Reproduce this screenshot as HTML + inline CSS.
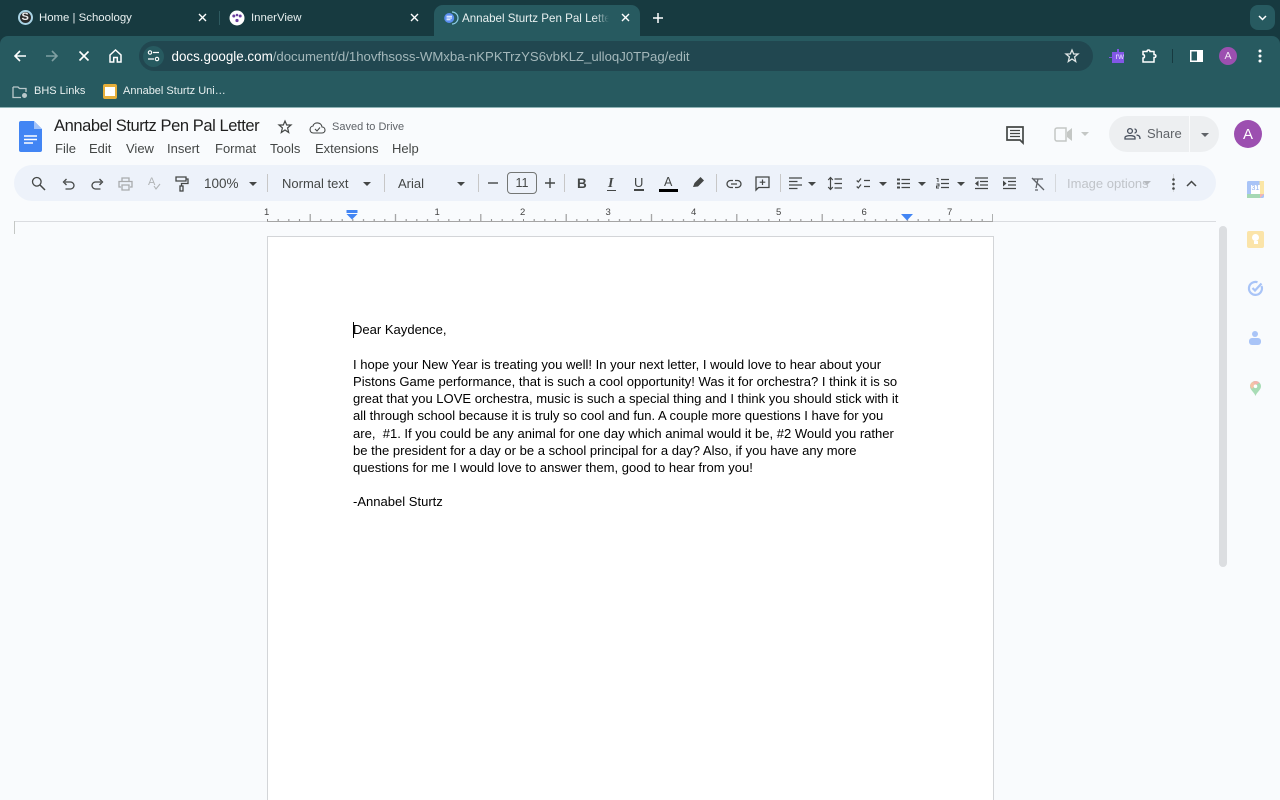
<!DOCTYPE html>
<html lang="en"><head><meta charset="utf-8"><title>Annabel Sturtz Pen Pal Letter</title>
<style>
html,body{margin:0;padding:0;width:1280px;height:800px;overflow:hidden;background:#f9fbfd;font-family:"Liberation Sans",Arial,sans-serif}
#root{position:absolute;left:0;top:0;width:1280px;height:800px;overflow:hidden;filter:blur(.3px)}
.a{position:absolute}
.t{position:absolute;white-space:nowrap;line-height:1}
svg{position:absolute;overflow:visible}
.w{color:#e8f0f0}
.m{font-size:13px;color:#444746;top:142px}
.d{font-size:13.04px;color:#000;left:353px;line-height:17px;white-space:nowrap;position:absolute}
.sep{position:absolute;width:1px;background:#c7c7c7;top:174px;height:18px}
</style></head><body><div id="root">
<!-- chrome -->
<div class="a" style="left:0;top:0;width:1280px;height:46px;background:#173a40"></div>
<div class="a" style="left:0;top:36px;width:1280px;height:71px;background:#275a60;border-radius:8px 8px 0 0"></div>
<div class="a" style="left:0;top:107px;width:1280px;height:1px;background:#8fb3b5"></div>
<div class="a" style="left:434px;top:5px;width:206px;height:31px;background:#275a60;border-radius:9px 9px 0 0"></div>
<div class="a" style="left:219px;top:11px;width:1px;height:14px;background:#2e5a60"></div>
<!-- tab 1 -->
<div class="a" style="left:18px;top:10px;width:11px;height:11px;border:2px solid #a9d4e6;border-radius:50%;background:#2b2b2b"></div>
<div class="t" style="left:21.5px;top:12px;font-size:11px;font-weight:bold;color:#eee">S</div>
<div class="t w" style="left:39px;top:12.500px;font-size:11.4px">Home | Schoology</div>
<svg style="left:198px;top:13px" width="9" height="9"><path d="M1 1L8 8M8 1L1 8" stroke="#fff" stroke-width="1.4"/></svg>
<!-- tab 2 -->
<svg style="left:229px;top:10px" width="16" height="16" viewBox="0 0 16 16"><circle cx="8" cy="8" r="7.5" fill="#fff"/><circle cx="4.8" cy="6" r="1.5" fill="#6b3fa0"/><circle cx="11.2" cy="6" r="1.5" fill="#6b3fa0"/><circle cx="8" cy="5" r="1.3" fill="#6b3fa0"/><circle cx="8" cy="10.5" r="1.6" fill="#6b3fa0"/></svg>
<div class="t w" style="left:251px;top:12.500px;font-size:11.4px">InnerView</div>
<svg style="left:410px;top:13px" width="9" height="9"><path d="M1 1L8 8M8 1L1 8" stroke="#fff" stroke-width="1.4"/></svg>
<!-- tab 3 -->
<svg style="left:443px;top:11px" width="14" height="14" viewBox="0 0 14 14"><path d="M9 1A6 6 0 0 1 9 13" fill="none" stroke="#8fd0ea" stroke-width="1.2"/><circle cx="6.2" cy="7" r="5" fill="#5b8ff0"/><path d="M3.5 5.2H9M3.5 7H9M3.5 8.8H7.5" stroke="#fff" stroke-width="1"/></svg>
<div class="t w" style="left:462px;top:12.500px;font-size:11.6px;width:147px;overflow:hidden">Annabel Sturtz Pen Pal Letter</div>
<div class="a" style="left:595px;top:8px;width:14px;height:20px;background:linear-gradient(90deg,rgba(39,90,96,0),#275a60)"></div>
<svg style="left:621px;top:13px" width="9" height="9"><path d="M1 1L8 8M8 1L1 8" stroke="#fff" stroke-width="1.4"/></svg>
<svg style="left:652px;top:12px" width="12" height="12"><path d="M6 1V11M1 6H11" stroke="#fff" stroke-width="1.5"/></svg>
<div class="a" style="left:1250px;top:5px;width:25px;height:25px;border-radius:8px;background:#275a60"></div>
<svg style="left:1257px;top:15px" width="11" height="6"><path d="M2 1L5.5 4.5L9 1" fill="none" stroke="#fff" stroke-width="1.5"/></svg>
<!-- nav -->
<svg style="left:13px;top:49px" width="14" height="14"><path d="M13 7H2M7 2L2 7L7 12" fill="none" stroke="#fff" stroke-width="1.6"/></svg>
<svg style="left:45px;top:49px" width="14" height="14"><path d="M1 7H12M7 2L12 7L7 12" fill="none" stroke="#7f9fa2" stroke-width="1.6"/></svg>
<svg style="left:78px;top:50px" width="12" height="12"><path d="M1.5 1.5L10.500 10.500M10.500 1.500L1.500 10.500" stroke="#fff" stroke-width="1.6"/></svg>
<svg style="left:109px;top:49px" width="13" height="14"><path d="M1 6L6.500 1L12 6V13H8.300V8.500H4.700V13H1Z" fill="none" stroke="#fff" stroke-width="1.5"/></svg>
<div class="a" style="left:139px;top:41px;width:954px;height:30px;border-radius:15px;background:#214750"></div>
<div class="a" style="left:143px;top:46px;width:21px;height:21px;border-radius:50%;background:#275a60"></div>
<svg style="left:147px;top:50px" width="13" height="12"><circle cx="3" cy="2.500" r="1.700" fill="none" stroke="#fff" stroke-width="1.100"/><path d="M6 2.500H12M1 9H7" stroke="#fff" stroke-width="1.200"/><circle cx="10" cy="9" r="1.700" fill="none" stroke="#fff" stroke-width="1.100"/></svg>
<div class="t" style="left:171.500px;top:49.500px;font-size:13.400px;color:#fff">docs.google.com<span style="color:#a4b8bb;font-size:13.180px">/document/d/1hovfhsoss-WMxba-nKPKTrzYS6vbKLZ_ulloqJ0TPag/edit</span></div>
<svg style="left:1065px;top:49px" width="14" height="14" viewBox="0 0 14 14"><path d="M7 1L8.700 5H13L9.600 7.900L10.700 12.500L7 10L3.300 12.500L4.400 7.900L1 5H5.300Z" fill="none" stroke="#e0e6e6" stroke-width="1.300"/></svg>
<svg style="left:1109px;top:49px" width="15" height="14"><path d="M0 8H3V3H8V0H10V3H15V14H3V9H0Z" fill="#8257e6"/></svg>
<div class="t" style="left:1115.500px;top:53px;font-size:8px;color:#e9e0ff">rw</div>
<svg style="left:1142px;top:49px" width="15" height="14"><path d="M1 2.500H5C5 .5 8 .5 8 2.500H12V5.500C14.500 5.500 14.500 8.500 12 8.500V13H1V9C3 9 3 5.500 1 5.500Z" fill="none" stroke="#fff" stroke-width="1.500"/></svg>
<div class="a" style="left:1172px;top:49px;width:1px;height:14px;background:#173a40"></div>
<svg style="left:1190px;top:50px" width="13" height="12"><rect x=".75" y=".75" width="11.500" height="10.500" fill="none" stroke="#fff" stroke-width="1.500"/><rect x="7" y="1" width="5" height="10" fill="#fff"/></svg>
<div class="a" style="left:1219px;top:47px;width:18px;height:18px;border-radius:50%;background:#9c4fb0"></div>
<div class="t" style="left:1224.500px;top:51px;font-size:10.500px;color:#f3e6f6">A</div>
<svg style="left:1258px;top:49px" width="4" height="14"><circle cx="2" cy="2" r="1.500" fill="#fff"/><circle cx="2" cy="7" r="1.500" fill="#fff"/><circle cx="2" cy="12" r="1.500" fill="#fff"/></svg>
<!-- bookmarks -->
<svg style="left:12px;top:85px" width="17" height="14"><path d="M1 2H6L7.500 3.500H14V7M1 2V12.500H9" fill="none" stroke="#b9c8ca" stroke-width="1.300"/><circle cx="12.500" cy="10.500" r="2.500" fill="#b9c8ca"/></svg>
<div class="t w" style="left:34px;top:86px;font-size:11px">BHS Links</div>
<div class="a" style="left:103px;top:84px;width:14px;height:15px;border-radius:2px;background:#e6ae3a"></div>
<div class="a" style="left:105px;top:87px;width:10px;height:9px;background:#fff"></div>
<div class="t w" style="left:123px;top:86px;font-size:11px">Annabel Sturtz Uni…</div>

<!-- docs header -->
<svg style="left:19px;top:121px" width="23" height="31" viewBox="0 0 23 31"><path d="M2 0H15L23 8V29A2 2 0 0 1 21 31H2A2 2 0 0 1 0 29V2A2 2 0 0 1 2 0Z" fill="#4285f4"/><path d="M15 0L23 8H15Z" fill="#a1c2fa"/><path d="M5 15H18M5 18.500H18M5 22H14" stroke="#fff" stroke-width="1.500"/></svg>
<div class="t" style="left:54px;top:118px;font-size:16.500px;letter-spacing:-.42px;color:#1f1f1f">Annabel Sturtz Pen Pal Letter</div>
<svg style="left:278px;top:120px" width="14" height="14" viewBox="0 0 14 14"><path d="M7 1L8.700 5H13L9.600 7.900L10.700 12.500L7 10L3.300 12.500L4.400 7.900L1 5H5.300Z" fill="none" stroke="#444746" stroke-width="1.200"/></svg>
<svg style="left:309px;top:121px" width="17" height="13" viewBox="0 0 17 13"><path d="M4.500 12H13C17 12 17 6 13 6C12.500 1 5 .5 4 5C0 5.500 0 12 4.500 12Z" fill="none" stroke="#444746" stroke-width="1.100"/><path d="M6 8L8 10L11 6.500" fill="none" stroke="#444746" stroke-width="1.100"/></svg>
<div class="t" style="left:332px;top:122px;font-size:11px;color:#5f6368">Saved to Drive</div>
<div class="t m" style="left:55px">File</div>
<div class="t m" style="left:89px">Edit</div>
<div class="t m" style="left:126px">View</div>
<div class="t m" style="left:167px">Insert</div>
<div class="t m" style="left:215px">Format</div>
<div class="t m" style="left:270px">Tools</div>
<div class="t m" style="left:315px">Extensions</div>
<div class="t m" style="left:392px">Help</div>
<!-- right header -->
<svg style="left:1006px;top:126px" width="18" height="18" viewBox="0 0 18 18"><path d="M1 1H17V17L14 14H1Z" fill="none" stroke="#444746" stroke-width="1.700"/><path d="M4 4.500H14M4 7.500H14M4 10.500H14" stroke="#444746" stroke-width="1.300"/></svg>
<svg style="left:1054px;top:127px" width="18" height="15"><path d="M3 1H12V14H3A2 2 0 0 1 1 12V3A2 2 0 0 1 3 1Z" fill="none" stroke="#c4c7c5" stroke-width="1.500"/><path d="M13 5L18 1V14L13 10Z" fill="#c4c7c5"/></svg>
<svg style="left:1081px;top:132px" width="8" height="4"><path d="M0 0H8L4 4Z" fill="#c4c7c5"/></svg>
<div class="a" style="left:1109px;top:116px;width:110px;height:36px;border-radius:18px;background:#edeff1"></div>
<div class="a" style="left:1189px;top:116px;width:1px;height:36px;background:#fafbfc"></div>
<svg style="left:1124px;top:128px" width="17" height="12" viewBox="0 0 17 12"><circle cx="6" cy="3" r="2.400" fill="none" stroke="#474f5c" stroke-width="1.300"/><path d="M1 11V9.500C1 7 11 7 11 9.500V11Z" fill="none" stroke="#474f5c" stroke-width="1.300"/><path d="M10.500 1C13 1 13 5 10.500 5M12.500 7C15 7.500 16 8 16 11" fill="none" stroke="#474f5c" stroke-width="1.300"/></svg>
<div class="t" style="left:1147px;top:127px;font-size:13px;color:#5f6368">Share</div>
<svg style="left:1201px;top:133px" width="8" height="4"><path d="M0 0H8L4 4Z" fill="#5f6368"/></svg>
<div class="a" style="left:1234px;top:120px;width:28px;height:28px;border-radius:50%;background:#9c4fb0"></div>
<div class="t" style="left:1243px;top:127px;font-size:15px;color:#fff">A</div>

<!-- toolbar -->
<div class="a" style="left:14px;top:165px;width:1202px;height:36px;border-radius:18px;background:#edf2fa"></div>
<svg style="left:31px;top:176px" width="15" height="15"><circle cx="5.800" cy="5.800" r="4.300" fill="none" stroke="#444746" stroke-width="1.300"/><path d="M9 9L14 14" stroke="#444746" stroke-width="1.500"/></svg>
<svg style="left:62px;top:178px" width="13" height="12"><path d="M3 4H8.500A3.200 3.200 0 0 1 8.500 11H3.500M4.500 1L1.500 4L4.500 7" fill="none" stroke="#444746" stroke-width="1.300"/></svg>
<svg style="left:91px;top:178px" width="13" height="12"><path d="M10 4H4.500A3.200 3.200 0 0 0 4.500 11H9.500M8.500 1L11.500 4L8.500 7" fill="none" stroke="#444746" stroke-width="1.300"/></svg>
<svg style="left:118px;top:177px" width="15" height="14"><path d="M4 4V1H11V4M3 10H1V4.500H14V10H12M4 8H11V13H4Z" fill="none" stroke="#a9abad" stroke-width="1.300"/></svg>
<div class="t" style="left:148px;top:177px;font-size:11px;color:#b0b3b5">A</div>
<svg style="left:153px;top:183px" width="8" height="7"><path d="M1 3L3 6L7 1" fill="none" stroke="#b0b3b5" stroke-width="1.100"/></svg>
<svg style="left:175px;top:176px" width="14" height="16"><path d="M1 1H11V5H1ZM11 3H13V7.500H6.500V10" fill="none" stroke="#444746" stroke-width="1.300"/><rect x="5" y="10" width="3" height="5" fill="none" stroke="#444746" stroke-width="1.300"/></svg>
<div class="t" style="left:204px;top:177px;font-size:13.500px;color:#444746">100%</div>
<svg style="left:249px;top:182px" width="8" height="4"><path d="M0 0H8L4 4Z" fill="#444746"/></svg>
<div class="sep" style="left:267px"></div>
<div class="t" style="left:282px;top:176.500px;font-size:13px;color:#444746">Normal text</div>
<svg style="left:363px;top:182px" width="8" height="4"><path d="M0 0H8L4 4Z" fill="#444746"/></svg>
<div class="sep" style="left:384px"></div>
<div class="t" style="left:398px;top:176.500px;font-size:13px;color:#444746">Arial</div>
<svg style="left:457px;top:182px" width="8" height="4"><path d="M0 0H8L4 4Z" fill="#444746"/></svg>
<div class="sep" style="left:478px"></div>
<svg style="left:488px;top:182px" width="10" height="2"><path d="M0 1H10" stroke="#444746" stroke-width="1.400"/></svg>
<div class="a" style="left:507px;top:172px;width:28px;height:20px;border:1px solid #747775;border-radius:4px"></div>
<div class="t" style="left:515.500px;top:176.500px;font-size:12.500px;color:#444746">11</div>
<svg style="left:545px;top:178px" width="10" height="10"><path d="M5 0V10M0 5H10" stroke="#444746" stroke-width="1.400"/></svg>
<div class="sep" style="left:564px"></div>
<div class="t" style="left:577px;top:177px;font-size:13.500px;font-weight:bold;color:#444746">B</div>
<div class="t" style="left:608px;top:177px;font-family:'Liberation Serif',serif;font-size:14px;font-style:italic;font-weight:bold;color:#444746">I</div>
<div class="a" style="left:607px;top:189.500px;width:9px;height:1px;background:#444746"></div>
<div class="t" style="left:634px;top:176px;font-size:13px;color:#444746">U</div>
<div class="a" style="left:634px;top:189px;width:10px;height:1.500px;background:#444746"></div>
<div class="t" style="left:664px;top:176px;font-size:12.500px;color:#444746">A</div>
<div class="a" style="left:659px;top:188.500px;width:19px;height:3px;background:#000"></div>
<svg style="left:692px;top:175px" width="14" height="14"><path d="M1 12L2.500 8L8.500 2L12 5.500L6 11.500Z" fill="#444746"/></svg>
<div class="sep" style="left:716px"></div>
<svg style="left:726px;top:179px" width="16" height="10"><path d="M7 1.500H4.500A3.400 3.400 0 0 0 4.500 8.500H7M9 1.500H11.500A3.400 3.400 0 0 1 11.500 8.500H9M5 5H11" fill="none" stroke="#444746" stroke-width="1.300"/></svg>
<svg style="left:755px;top:176px" width="15" height="15"><path d="M1 1H14V11.500H3.500L1 14Z" fill="none" stroke="#444746" stroke-width="1.300"/><path d="M7.500 3.500V9M4.700 6.200H10.300" stroke="#444746" stroke-width="1.200"/></svg>
<div class="sep" style="left:780px"></div>
<svg style="left:789px;top:177px" width="13" height="13"><path d="M0 1H13M0 4.500H8.500M0 8H13M0 11.500H8.500" stroke="#444746" stroke-width="1.300"/></svg>
<svg style="left:808px;top:182px" width="8" height="4"><path d="M0 0H8L4 4Z" fill="#444746"/></svg>
<svg style="left:827px;top:177px" width="15" height="13"><path d="M3.500 1V12M1.200 3L3.500 .5L5.800 3M1.200 10L3.500 12.500L5.800 10" fill="none" stroke="#444746" stroke-width="1.200"/><path d="M7.500 2H15M7.500 6.500H15M7.500 11H15" stroke="#444746" stroke-width="1.300"/></svg>
<svg style="left:856px;top:178px" width="17" height="11"><path d="M.7 2.500L2.300 4L5 .5M.7 8.500L2.300 10L5 6.500" fill="none" stroke="#444746" stroke-width="1.200"/><path d="M8 2.500H14M8 8.500H14" stroke="#444746" stroke-width="1.300"/></svg>
<svg style="left:879px;top:182px" width="8" height="4"><path d="M0 0H8L4 4Z" fill="#444746"/></svg>
<svg style="left:897px;top:178px" width="13" height="11"><path d="M0 1.500H3M0 5.500H3M0 9.500H3" stroke="#444746" stroke-width="2"/><path d="M4.500 1.500H13M4.500 5.500H13M4.500 9.500H13" stroke="#444746" stroke-width="1.300"/></svg>
<svg style="left:918px;top:182px" width="8" height="4"><path d="M0 0H8L4 4Z" fill="#444746"/></svg>
<svg style="left:936px;top:177px" width="13" height="13"><path d="M.5 1.500H2V5M.5 7H3V9H.5V11H3" fill="none" stroke="#444746" stroke-width="1"/><path d="M5 2.500H13M5 6.500H13M5 10.500H13" stroke="#444746" stroke-width="1.300"/></svg>
<svg style="left:957px;top:182px" width="8" height="4"><path d="M0 0H8L4 4Z" fill="#444746"/></svg>
<svg style="left:975px;top:177px" width="13" height="13"><path d="M0 1H13M5 4.500H13M5 8H13M0 11.500H13" stroke="#444746" stroke-width="1.300"/><path d="M3.500 3.500V9.500L0 6.500Z" fill="#444746"/></svg>
<svg style="left:1003px;top:177px" width="13" height="13"><path d="M0 1H13M5 4.500H13M5 8H13M0 11.500H13" stroke="#444746" stroke-width="1.300"/><path d="M0 3.500V9.500L3.500 6.500Z" fill="#444746"/></svg>
<svg style="left:1031px;top:177px" width="14" height="14"><path d="M1 1L13 13M2 2H12M7 2L5 11M4 13H7" fill="none" stroke="#5f6368" stroke-width="1.300"/></svg>
<div class="sep" style="left:1055px;background:#d5d8dc"></div>
<div class="t" style="left:1067px;top:177px;font-size:13px;color:#c0c4c9">Image options</div>
<svg style="left:1143px;top:181px" width="8" height="4"><path d="M0 0H8L4 4Z" fill="#b6babf"/></svg>
<div class="a" style="left:1173px;top:174px;width:1px;height:18px;background:#d5d8dc"></div>
<svg style="left:1172px;top:178px" width="3" height="12"><circle cx="1.500" cy="1.500" r="1.300" fill="#444746"/><circle cx="1.500" cy="6" r="1.300" fill="#444746"/><circle cx="1.500" cy="10.500" r="1.300" fill="#444746"/></svg>
<svg style="left:1186px;top:180px" width="11" height="7"><path d="M1 6L5.500 1.500L10 6" fill="none" stroke="#444746" stroke-width="1.500"/></svg>

<!-- ruler -->
<div class="a" style="left:14px;top:221px;width:1202px;height:1px;background:#dadce0"></div>
<div class="a" style="left:14px;top:221px;width:1px;height:13px;background:#c4c7c5"></div>
<svg style="left:267px;top:210px" width="727" height="13">
<defs><pattern id="r" x="0" y="0" width="85.333" height="13" patternUnits="userSpaceOnUse"><path d="M.5 9V12M11.170 9V12M21.830 9V12M32.500 9V12M43.170 4V12M53.830 9V12M64.500 9V12M75.170 9V12" stroke="#8a8a8a" stroke-width="1" fill="none"/></pattern></defs>
<rect x="0" y="0" width="726" height="13" fill="url(#r)"/>
<path d="M0 11.500H726" stroke="#a5a5a5" stroke-width="1"/>
</svg>
<div class="t" style="left:264px;top:208px;font-size:9.500px;color:#444">1</div>
<div class="t" style="left:434.500px;top:208px;font-size:9.500px;color:#444">1</div>
<div class="t" style="left:520px;top:208px;font-size:9.500px;color:#444">2</div>
<div class="t" style="left:605.500px;top:208px;font-size:9.500px;color:#444">3</div>
<div class="t" style="left:691px;top:208px;font-size:9.500px;color:#444">4</div>
<div class="t" style="left:776px;top:208px;font-size:9.500px;color:#444">5</div>
<div class="t" style="left:861.500px;top:208px;font-size:9.500px;color:#444">6</div>
<div class="t" style="left:947px;top:208px;font-size:9.500px;color:#444">7</div>
<svg style="left:346px;top:210px" width="12" height="10"><rect x="0.500" y="0" width="11" height="3" fill="#4285f4"/><path d="M.5 4H11.500L6 9.500Z" fill="#4285f4"/></svg>
<svg style="left:901px;top:214px" width="12" height="7"><path d="M0 0H12L6 6.500Z" fill="#4285f4"/></svg>

<!-- page -->
<div class="a" style="left:267px;top:236px;width:725px;height:580px;background:#fff;border:1px solid #d3d5d8"></div>
<div class="a" style="left:353px;top:322px;width:1px;height:16px;background:#000"></div>
<div class="d" style="top:321px">Dear Kaydence,</div>
<div class="d" style="top:355.500px">I hope your New Year is treating you well! In your next letter, I would love to hear about your</div>
<div class="d" style="top:372.500px">Pistons Game performance, that is such a cool opportunity! Was it for orchestra? I think it is so</div>
<div class="d" style="top:389.500px">great that you LOVE orchestra, music is such a special thing and I think you should stick with it</div>
<div class="d" style="top:406.500px">all through school because it is truly so cool and fun. A couple more questions I have for you</div>
<div class="d" style="top:424.500px">are,&nbsp; #1. If you could be any animal for one day which animal would it be, #2 Would you rather</div>
<div class="d" style="top:441.500px">be the president for a day or be a school principal for a day? Also, if you have any more</div>
<div class="d" style="top:458.500px">questions for me I would love to answer them, good to hear from you!</div>
<div class="d" style="top:492.500px">-Annabel Sturtz</div>

<!-- scrollbar -->
<div class="a" style="left:1219px;top:226px;width:8px;height:341px;border-radius:4px;background:#dcdee1"></div>
<!-- side panel -->
<svg style="left:1247px;top:181px" width="17" height="17" viewBox="0 0 17 17"><rect width="17" height="17" rx="1.500" fill="#a9c4f7"/><rect x="12.500" y="0" width="4.500" height="13" fill="#fbe6a6"/><rect x="0" y="13" width="13" height="4" fill="#a6d8b4"/><path d="M13 13H17L13 17Z" fill="#f5b5ae"/><rect x="4" y="4" width="9" height="9" fill="#fff"/></svg>
<div class="t" style="left:1251.500px;top:185px;font-size:7px;color:#8fb0ef">31</div>
<div class="a" style="left:1247px;top:231px;width:17px;height:17px;border-radius:2px;background:#fbe4a9"></div>
<div class="a" style="left:1252px;top:234px;width:7px;height:7px;border-radius:50%;background:#fff"></div>
<div class="a" style="left:1253.500px;top:241px;width:4px;height:3px;background:#fff"></div>
<svg style="left:1247px;top:280px" width="17" height="17" viewBox="0 0 17 17"><path d="M14.500 6A6.500 6.500 0 1 1 10.500 2.200" fill="none" stroke="#a9c4f7" stroke-width="2.200"/><path d="M5.500 8L8 10.500L14.500 3.500" fill="none" stroke="#a9c4f7" stroke-width="2.200"/></svg>
<div class="a" style="left:1252px;top:331px;width:6px;height:6px;border-radius:50%;background:#a9c4f7"></div>
<div class="a" style="left:1249px;top:338px;width:12px;height:7px;border-radius:3px;background:#a9c4f7"></div>
<svg style="left:1250px;top:381px" width="11" height="15" viewBox="0 0 11 15"><path d="M5.500 0A5.300 5.300 0 0 1 11 5.300C11 9 7 11 5.500 15C4 11 0 9 0 5.300A5.300 5.300 0 0 1 5.500 0Z" fill="#a8dcb5"/><path d="M0 5.300A5.300 5.300 0 0 1 3 .7L5.500 4L2 8Z" fill="#f5c4a8"/><path d="M3 .7A5.300 5.300 0 0 1 9.500 1.700L5.500 4Z" fill="#f5b5ae"/><circle cx="5.500" cy="5.300" r="1.800" fill="#fff"/></svg>
</div></body></html>
